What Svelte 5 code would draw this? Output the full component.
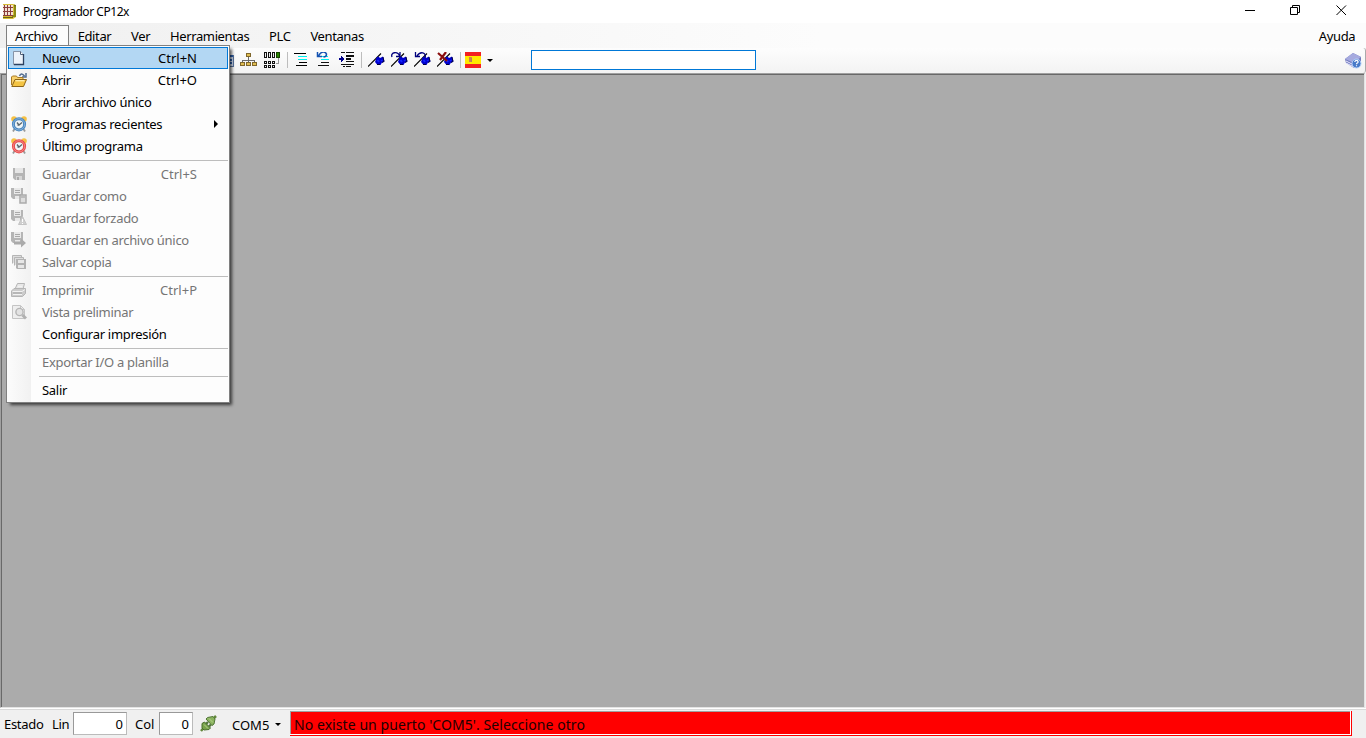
<script lang="ts">
  type Entry = { label: string; keys?: string; icon?: string; off?: boolean; sub?: boolean };

  const groups: Entry[][] = [
    [
      { label: 'Nuevo', keys: 'Ctrl+N', icon: 'new' },
      { label: 'Abrir', keys: 'Ctrl+O', icon: 'open' },
      { label: 'Abrir archivo único' },
      { label: 'Programas recientes', icon: 'clock', sub: true },
      { label: 'Último programa', icon: 'clock-red' }
    ],
    [
      { label: 'Guardar', keys: 'Ctrl+S', icon: 'save', off: true },
      { label: 'Guardar como', icon: 'save-as', off: true },
      { label: 'Guardar forzado', icon: 'save-force', off: true },
      { label: 'Guardar en archivo único', icon: 'save-one', off: true },
      { label: 'Salvar copia', icon: 'copy', off: true }
    ],
    [
      { label: 'Imprimir', keys: 'Ctrl+P', icon: 'print', off: true },
      { label: 'Vista preliminar', icon: 'preview', off: true },
      { label: 'Configurar impresión' }
    ],
    [{ label: 'Exportar I/O a planilla', off: true }],
    [{ label: 'Salir' }]
  ];

  const menus = ['Archivo', 'Editar', 'Ver', 'Herramientas', 'PLC', 'Ventanas'];

  let opened = $state('Archivo');
  let selected = $state('Nuevo');
  let search = $state('');
  let line = $state('0');
  let column = $state('0');
</script>

{#snippet entryIcon(name: string)}
  <svg width="16" height="16" viewBox="0 0 16 16">
    {#if name === 'new'}
      <path d="M2.500 1.500h7l3 3v10h-10z" fill="#edf3fa" stroke="#8794a7" />
      <path d="M9.500 1.500v3h3" fill="#fff" stroke="#52637b" />
      <path d="M12.500 4v10.500H3" fill="none" stroke="#2c415f" stroke-width="1.300" />
    {:else if name === 'open'}
      <path d="M8.500 4c1-3 3-2.500 5 0M15 1v4h-4" fill="none" stroke="#526d91" stroke-width="1.500" />
      <path d="M.5 13V5l1-1h4l1 1.500H12V8" fill="#f8d06a" stroke="#a87a24" />
      <path d="M.8 14.500L4 7.500h11.500l-3 7z" fill="#f4c443" stroke="#8d6518" />
      <path d="M4.500 8.700h9" stroke="#ffedaa" stroke-width="1.400" />
    {:else if name === 'clock' || name === 'clock-red'}
      {@const tone = name === 'clock' ? '#4a88c2' : '#ea4a4a'}
      <path d="M3.500 13L2 15.500M12.500 13l1.500 2.500" stroke="#999" stroke-width="1.800" />
      <circle cx="3" cy="3" r="2.800" fill="#f5c044" />
      <circle cx="13" cy="3" r="2.800" fill="#f5c044" />
      <circle cx="8" cy="8.300" r="5.600" fill="#eef4f6" stroke={tone} stroke-width="3" />
      <circle cx="8" cy="8.300" r="5.700" fill="none" stroke="#fff" stroke-width=".8" opacity=".4" />
      <path d="M6 6.500L8 9l3-2.500M8 9H6.500" fill="none" stroke="#59656d" stroke-width="1.300" />
    {:else if name === 'save'}
      <path d="M2 2h12v12H4l-2-2z" fill="#b5b5b5" />
      <path d="M4 2h8v5H4z" fill="#e6e6e6" />
      <path d="M5 10h6v4H5z" fill="#d6d6d6" />
      <path d="M6 11h2v3H6z" fill="#aaa" />
    {:else if name.startsWith('save-')}
      <path d="M0 0h12v11H2l-2-2z" fill="#b5b5b5" />
      <path d="M3 0h7v6H3zM4 8h5v3H4z" fill="#e9e9e9" />
      <path d="M4 2.500h5M4 4.500h5" stroke="#aaa" />
      {#if name === 'save-as'}
        <path d="M9 7h6v8H9z" fill="#ddd" stroke="#aaa" stroke-width="1.500" />
        <path d="M10 8h4v2h-4z" fill="#bbb" />
      {:else if name === 'save-force'}
        <path d="M11.500 6.500l4 8h-8z" fill="#cfcfcf" stroke="#c4c4c4" stroke-linejoin="round" />
        <path d="M11.500 9v3M11.500 13v1" stroke="#fff" />
      {:else}
        <path d="M3 9.500h7v-3l5 4.500-5 4.500v-3H3z" fill="#aaa" />
      {/if}
    {:else if name === 'copy'}
      <path d="M1.500 9.500v-8h9v2M3.500 11.500v-8h9v2" fill="#ddd" stroke="#b5b5b5" />
      <path d="M5 5h10v10H6l-1-1z" fill="#b2b2b2" />
      <path d="M7 6h6v3H7zM7 11h6v3H7z" fill="#e7e7e7" />
    {:else if name === 'print'}
      <path d="M4 7l2.500-5.500h7L12 7" fill="#e8e8e8" stroke="#b5b5b5" />
      <path d="M.5 9L3 6.500h11.500v5l-3 3H.5z" fill="#ccc" stroke="#b5b5b5" />
      <path d="M1.500 9.500H11l3-2M2 12.500h9M7 4.500h4" fill="none" stroke="#f2f2f2" />
      <path d="M2 11h9" stroke="#a2a2a2" />
    {:else}
      <path d="M1.500 1.500h8l4 4v9h-12z" fill="#eee" stroke="#c4c4c4" />
      <path d="M9.500 1.500v4h4" fill="none" stroke="#c4c4c4" />
      <circle cx="8.500" cy="8" r="3.600" fill="#e3e3e3" stroke="#b5b5b5" stroke-width="1.400" />
      <path d="M11.500 11l3.500 3.500" stroke="#b0b0b0" stroke-width="3" />
    {/if}
  </svg>
{/snippet}

{#snippet flag()}
  <path d="M0 14.500L13 1.500" stroke="#000" stroke-width="1.100" />
  <path d="M8.500 5.500l2-1 1.500 1.500 3-1.500 1.500 5-2.500 1-1.500 2.500h-3l-2.500-3z" fill="#00c" />
  <path d="M15 5l1 4.500-2 1M12 12.500h-3" fill="none" stroke="#00003c" />
  <path d="M9.500 8l1.500 2M13.500 8l.5 1" stroke="#12f" stroke-width="2" />
{/snippet}

<div class="window">
  <header class="titlebar">
    <svg width="17" height="17" viewBox="0 0 17 17">
      <path d="M1 1h10l3 1v12l-3 2H1z" fill="#d8bd35" />
      <path d="M12 2h2v12h-4v-2h2z" fill="#8c8b16" />
      <path d="M1 2h10v11H1z" fill="#f3e2d4" />
      <path d="M2.500 2v11M5.500 2v11M8.500 2v11M1 4.500h10M1 8.500h10M1 12.500h10" stroke="#8b3e3c" shape-rendering="crispEdges" />
      <path d="M1 14.500h10M12 2l2 1" stroke="#6c6417" />
    </svg>
    <h1>Programador CP12x</h1>
    <div class="controls">
      <button aria-label="Minimizar">
        <svg width="11" height="11"><path d="M1 5.500h10" stroke="#000" /></svg>
      </button>
      <button aria-label="Restaurar">
        <svg width="11" height="11"><path d="M.5 2.500h7v7h-7zM2.500 2.500v-2h7v7h-2" fill="none" stroke="#000" /></svg>
      </button>
      <button aria-label="Cerrar">
        <svg width="11" height="11"><path d="M.5.5l9.500 9.500M10 .5L.5 10" stroke="#000" /></svg>
      </button>
    </div>
  </header>

  <nav class="menubar">
    {#each menus as name}
      <div class="menu">
        <button class="menu-title" class:opened={opened === name} onclick={() => (opened = opened === name ? '' : name)}>
          {name}
        </button>
        {#if name === 'Archivo' && opened === name}
          <div class="dropdown" role="menu">
            {#each groups as group, i}
              {#if i > 0}<div class="separator"></div>{/if}
              {#each group as entry}
                <button
                  class="entry"
                  class:selected={selected === entry.label}
                  disabled={entry.off}
                  role="menuitem"
                  onmouseenter={() => (selected = entry.label)}
                >
                  <span class="entry-icon">{#if entry.icon}{@render entryIcon(entry.icon)}{/if}</span>
                  <span class="label">{entry.label}</span>
                  {#if entry.keys}<span class="keys">{entry.keys}</span>{/if}
                  {#if entry.sub}<span class="arrow"></span>{/if}
                </button>
              {/each}
            {/each}
          </div>
        {/if}
      </div>
    {/each}
    <button class="menu-title help">Ayuda</button>
  </nav>

  <div class="toolbar">
    <div class="tools">
      <svg width="16" height="16" shape-rendering="crispEdges">
        <path d="M1 3h14v11H1z" fill="#d7e5fa" stroke="#59739d" />
        <path d="M1 4h14M4 8h10M4 11h10" stroke="#3165b5" stroke-width="2" />
      </svg>
      <svg width="17" height="16" shape-rendering="crispEdges">
        <path d="M8.500 5v4M2.500 11V8.500h12V11M8.500 8v3" fill="none" stroke="#6b6b6b" />
        <path d="M6.500 1.500h4v3h-4zM.5 10.500h4v3h-4zM6.500 10.500h4v3h-4zM12.500 10.500h4v3h-4z" fill="#dfbd52" stroke="#80672d" />
      </svg>
      <svg class="grid" width="17" height="16" shape-rendering="crispEdges">
        <path d="M1.500.5h2v5h-2zM5.500.5h2v5h-2zM9.500.5h2v5h-2zM1.500 9.500h2v2h-2zM5.500 9.500h2v2h-2zM9.500 9.500h2v2h-2zM1.500 13.500h2v2h-2zM5.500 13.500h2v2h-2zM9.500 13.500h2v2h-2z" fill="#eee" stroke="#111" />
        <path d="M13.500.5h3v5h-3z" fill="#278500" stroke="#174400" />
        <path d="M15.500 6v5.500H13" fill="none" stroke="#999" />
      </svg>
      <i class="divider"></i>
      <svg width="16" height="16" shape-rendering="crispEdges">
        <path d="M0 1.500h12M5 10.500h8M2 13.500h11" stroke="#000" />
        <path d="M4 4.500h9M4 7.500h9" stroke="#0ee" />
      </svg>
      <svg width="16" height="16">
        <path d="M5 10.500h8M2 13.500h11" stroke="#111" shape-rendering="crispEdges" />
        <path d="M5 4.500h7M5 7.500h8" stroke="#0ee" shape-rendering="crispEdges" />
        <path d="M1.500 0v4.500H6M2.500 4C5-1 9-1 10.500 2c0 2-1 3-3 3" fill="none" stroke="#1553b2" stroke-width="1.500" />
      </svg>
      <svg width="17" height="16" shape-rendering="crispEdges">
        <path d="M3 .5h4M8 .5h8M8 3.500h8M8 6.500h5M8 9.500h8M3 12.500h13M5 14.500h2M8 14.500h5" stroke="#111" />
        <path d="M8 4.500h8M8 7.500h5" stroke="#111" />
        <path d="M1 7h4" stroke="#00008b" stroke-width="2" />
        <path d="M3 4l3 3-3 3z" fill="#00008b" />
      </svg>
      <i class="divider"></i>
      <svg width="17" height="16">{@render flag()}</svg>
      <svg width="17" height="16">
        {@render flag()}
        <path d="M1 5C-1 0 7-1 8.500 4M9 0v4.500H5" fill="none" stroke="#00007d" stroke-width="1.300" />
      </svg>
      <svg width="17" height="16">
        {@render flag()}
        <path d="M11 6c2-6-5-7-8-2M1.500 0v4.500H6" fill="none" stroke="#00007d" stroke-width="1.300" />
      </svg>
      <svg width="17" height="16">
        {@render flag()}
        <path d="M1 1l9 8M9 0L3 8" stroke="#8b1010" stroke-width="2.200" />
      </svg>
      <i class="divider"></i>
      <svg class="spain" width="16" height="16">
        <path d="M0 0h16v16H0z" fill="#f32020" />
        <path d="M0 4h16v8H0z" fill="#ffe800" />
        <path d="M4 5h3v5H4z" fill="#e58a38" />
        <path d="M5 5v5M6.500 6v4" stroke="#b57867" />
      </svg>
      <span class="caret"></span>
    </div>
    <input class="search" bind:value={search} />
    <svg class="book" width="17" height="17" viewBox="0 0 17 17">
      <path d="M0 7l8-6 8 4v4l-7 7-8-5z" fill="#7279bd" />
      <path d="M0 7l8-6 8 4-7 6z" fill="#a6aadf" />
      <path d="M1 9l8 4 3-2M1 11l8 4" fill="none" stroke="#e8eaff" />
      <circle cx="11.500" cy="11.500" r="4.500" fill="#487ac8" stroke="#b6d2fb" />
      <path d="M9.800 10c.2-2.400 3.800-1.800 3.200.2-.3.900-1.500.8-1.500 2M11.500 13.200v1" fill="none" stroke="#fff" stroke-width="1.200" />
    </svg>
  </div>

  <main></main>

  <footer>
    <span class="state">Estado</span>
    <span class="lin">Lin</span>
    <input class="line" bind:value={line} />
    <span class="col">Col</span>
    <input class="column" bind:value={column} />
    <svg class="plug" width="17" height="17" viewBox="0 0 17 17">
      <path d="M1 16l3-3.500M13 4l3-3" stroke="#63883c" stroke-width="2.500" />
      <path d="M2 8.500l2.500-1.500 6 6-1.500 1.500-5 .5-2-2z" fill="#78a34b" stroke="#486c2d" />
      <path d="M6 4l1.500-1.500L13 1.500 15 4l-1 5-2 1.500z" fill="#8bb45e" stroke="#52763a" />
      <path d="M6 9l2-2M9 11.500l2-2" stroke="#52763a" stroke-width="2.400" />
      <path d="M4 9.500l4 4M9 3.500l4 4" stroke="#b5d18f" />
    </svg>
    <button class="port">COM5<span class="caret"></span></button>
    <div class="message"><p>No existe un puerto 'COM5'. Seleccione otro</p></div>
  </footer>
</div>

<style>
  :global(body) {
    margin: 0;
    overflow: hidden;
  }

  .window {
    width: 1366px;
    height: 738px;
    display: flex;
    flex-direction: column;
    background: #f0f0f0;
    color: #000;
    font: 13px/20px 'Noto Sans', 'Open Sans', sans-serif;
  }

  .window * {
    box-sizing: border-box;
  }

  svg {
    display: block;
    flex: none;
  }

  button {
    font: inherit;
    color: inherit;
    background: none;
    border: 0;
    padding: 0;
    white-space: nowrap;
  }

  .titlebar {
    flex: 0 0 23px;
    display: flex;
    align-items: center;
    padding: 0 2px;
    background: #fff;
  }

  h1 {
    margin: 0 0 0 4px;
    font-size: 12px;
    font-weight: 400;
    letter-spacing: -0.45px;
  }

  .controls {
    margin-left: auto;
    display: flex;
    align-self: stretch;
  }

  .controls button {
    width: 46px;
    display: flex;
    justify-content: center;
    padding-top: 5px;
  }

  .menubar {
    flex: 0 0 25px;
    display: flex;
    padding: 2px 0 0 6px;
    background: linear-gradient(90deg, #f0f0f0, #fcfcfc 60%);
  }

  .menu {
    position: relative;
  }

  .menu-title {
    height: 21px;
    padding: 0 9.8px 0 8px;
    border: 1px solid transparent;
    border-width: 1px 1px 0;
    letter-spacing: -0.38px;
  }

  .menu-title.opened {
    background: #fcfcfc;
    border-color: #808080;
  }

  .help {
    margin-left: auto;
  }

  .dropdown {
    position: absolute;
    z-index: 10;
    left: 0;
    top: 20px;
    width: 224px;
    padding: 1px;
    border: 1px solid #808080;
    background: linear-gradient(90deg, #fcfcfc, #f1f1f1 24px, #fdfdfd 24px);
    box-shadow: 3px 3px 3px -1px rgba(0, 0, 0, 0.65);
  }

  .entry {
    width: 100%;
    height: 22px;
    display: flex;
    align-items: center;
    text-align: left;
    border: 1px solid transparent;
  }

  .entry:disabled {
    color: #757575;
  }

  .entry.selected {
    background: #b3d7f3;
    border-color: #0078d7;
  }

  .entry-icon {
    width: 33px;
    padding-left: 2px;
  }

  .label {
    letter-spacing: -0.3px;
  }

  .keys {
    margin-left: auto;
    margin-right: 30px;
  }

  .arrow {
    margin-left: auto;
    margin-right: 9px;
    border-left: 4px solid #000;
    border-top: 4px solid transparent;
    border-bottom: 4px solid transparent;
  }

  .separator {
    height: 6px;
    margin-left: 31px;
    background: linear-gradient(#bdbdbd, #bdbdbd) 0 3px / 100% 1px no-repeat;
  }

  .toolbar {
    flex: 0 0 25px;
    display: flex;
    align-items: center;
    padding: 0 3px 1px 218px;
    background: linear-gradient(#fdfdfd, #f3f3f3);
    border-right: 1px solid #aaa;
    border-radius: 0 3px 3px 0;
  }

  .tools {
    display: flex;
    align-items: center;
    gap: 6px;
    width: 313px;
  }

  .grid {
    margin-right: 1px;
  }

  .spain {
    margin-left: -2px;
  }

  .divider {
    width: 1px;
    height: 16px;
    background: #bdbdbd;
  }

  .caret {
    border-top: 3px solid #000;
    border-left: 3px solid transparent;
    border-right: 3px solid transparent;
  }

  .search {
    width: 225px;
    height: 20px;
    border: 1px solid #0078d7;
    background: #fff;
    outline: 0;
  }

  .book {
    margin-left: auto;
  }

  main {
    flex: 1;
    margin-right: 1px;
    background: #ababab;
    border: 1px solid #a0a0a0;
    border-right-color: #e3e3e3;
    border-bottom-color: #e3e3e3;
    box-shadow: inset 1px 1px #696969;
  }

  footer {
    flex: 0 0 30px;
    display: flex;
    align-items: center;
    padding: 1px 14px 1px 4px;
    border-top: 1px solid #fff;
    background: #f0f0f0;
    box-shadow: inset 0 1px #d9d9d9;
  }

  footer input {
    height: 23px;
    padding: 0 3px;
    border: 1px solid #999;
    border-right-color: #bbb;
    border-bottom-color: #bbb;
    background: #fff;
    font: inherit;
    text-align: right;
    outline: 0;
  }

  .state {
    width: 48px;
    letter-spacing: -0.3px;
  }

  .lin {
    width: 21px;
    letter-spacing: -0.3px;
  }

  .line {
    width: 54px;
  }

  .col {
    width: 32px;
    padding-left: 8px;
  }

  .column {
    width: 34px;
  }

  .plug {
    margin-left: 7px;
  }

  .port {
    display: flex;
    align-items: center;
    gap: 6px;
    width: 58px;
    margin-left: 15px;
    padding-top: 2px;
  }

  .message {
    flex: 1;
    height: 25px;
    padding: 0 1px 1px 0;
    border: 1px solid #f00;
    border-width: 0 1px 1px 0;
    background: #fff;
  }

  .message p {
    height: 23px;
    margin: 0;
    padding-left: 3px;
    background: #f00;
    border-top: 1px solid #a0a0a0;
    border-left: 1px solid #a0a0a0;
    font-size: 14px;
    line-height: 26px;
    letter-spacing: 0.07px;
    color: #200;
  }
</style>
